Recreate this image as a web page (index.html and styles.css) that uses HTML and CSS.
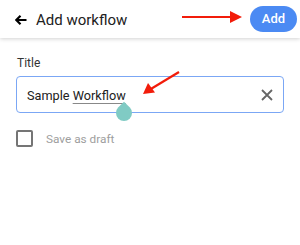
FILE: index.html
```html
<!DOCTYPE html>
<html>
<head>
<meta charset="utf-8">
<link rel="stylesheet" href="styles.css">
</head>
<body>
<header class="bar">
  <svg class="back" width="12" height="10" viewBox="0 0 12 10"><path d="M5.5 0.8 L1.3 5 L5.5 9.2 M1.5 5 H11.5" fill="none" stroke="#000" stroke-width="2.2"/></svg>
  <span class="heading">Add workflow</span>
  <button class="add">Add</button>
</header>
<main class="form">
  <label class="label">Title</label>
  <div class="field">
    <span class="value">Sample <span class="sel">Workflow</span></span>
    <svg class="clear" width="12" height="12" viewBox="0 0 12 12"><path d="M1 1 L11 11 M11 1 L1 11" stroke="#666" stroke-width="1.8"/></svg>
  </div>
  <div class="check">
    <span class="box"></span>
    <span class="check-text">Save as draft</span>
  </div>
</main>
<svg class="arrow arrow-top" width="62" height="16" viewBox="0 0 62 16"><path d="M0 8 H50" stroke="#f21c0a" stroke-width="2.2"/><path d="M48 2 L60 8 L48 14 Z" fill="#f21c0a"/></svg>
<svg class="arrow arrow-mid" width="40" height="26" viewBox="0 0 40 26"><path d="M37 1 L8 18.5" stroke="#f21c0a" stroke-width="2.2"/><path d="M1 23 L6 12 L13 21.5 Z" fill="#f21c0a"/></svg>
<span class="drop"></span>
</body>
</html>
```
FILE: styles.css
```css
* { box-sizing: border-box; }
html, body { margin: 0; padding: 0; background: #fff; }
body {
  width: 300px;
  height: 245px;
  position: relative;
  overflow: hidden;
  font-family: Roboto, "Noto Sans", sans-serif;
}
.bar {
  height: 38px;
  display: flex;
  align-items: center;
  padding: 0 3px 0 15px;
  box-shadow: 0 1px 4px rgba(0,0,0,0.18);
  background: #fff;
}
.back { flex: none; margin-top: 1px; }
.heading {
  margin-left: 9px;
  font-size: 15px;
  color: #212121;
  flex: 1;
  margin-top: 1px;
}
.add {
  width: 47px;
  height: 26px;
  border: none;
  border-radius: 13px;
  background: #4b8af3;
  color: #fff;
  font-family: Roboto, sans-serif;
  font-weight: 500;
  font-size: 13px;
  padding: 0;
  margin-top: -1px;
}
.form {
  padding: 18px 16px 0 16px;
  display: flex;
  flex-direction: column;
}
.label {
  font-size: 12px;
  color: #333;
  padding-left: 1px;
  line-height: 15px;
}
.field {
  margin-top: 5px;
  width: 268px;
  height: 37px;
  border: 1px solid #7ba7f5;
  border-radius: 4px;
  display: flex;
  align-items: center;
  padding: 0 9px 0 10px;
}
.value {
  flex: 1;
  font-size: 12.7px;
  color: #212121;
  margin-top: 1px;
}
.sel {
  text-decoration: underline;
  text-decoration-color: #888;
  text-underline-offset: 3px;
}
.clear { flex: none; margin-right: 1px; }
.check {
  margin-top: 17px;
  display: flex;
  align-items: center;
}
.box {
  width: 17px;
  height: 17px;
  border: 2px solid #757575;
  border-radius: 2px;
}
.check-text {
  margin-left: 13px;
  font-size: 11.8px;
  color: #9e9e9e;
}
.arrow { position: absolute; }
.arrow-top { left: 182px; top: 9px; }
.arrow-mid { left: 142px; top: 71px; }
.drop {
  position: absolute;
  left: 116px;
  top: 105px;
  width: 16px;
  height: 16px;
  background: #80cbc4;
  border-radius: 0 50% 50% 50%;
  transform: rotate(45deg);
}
```
